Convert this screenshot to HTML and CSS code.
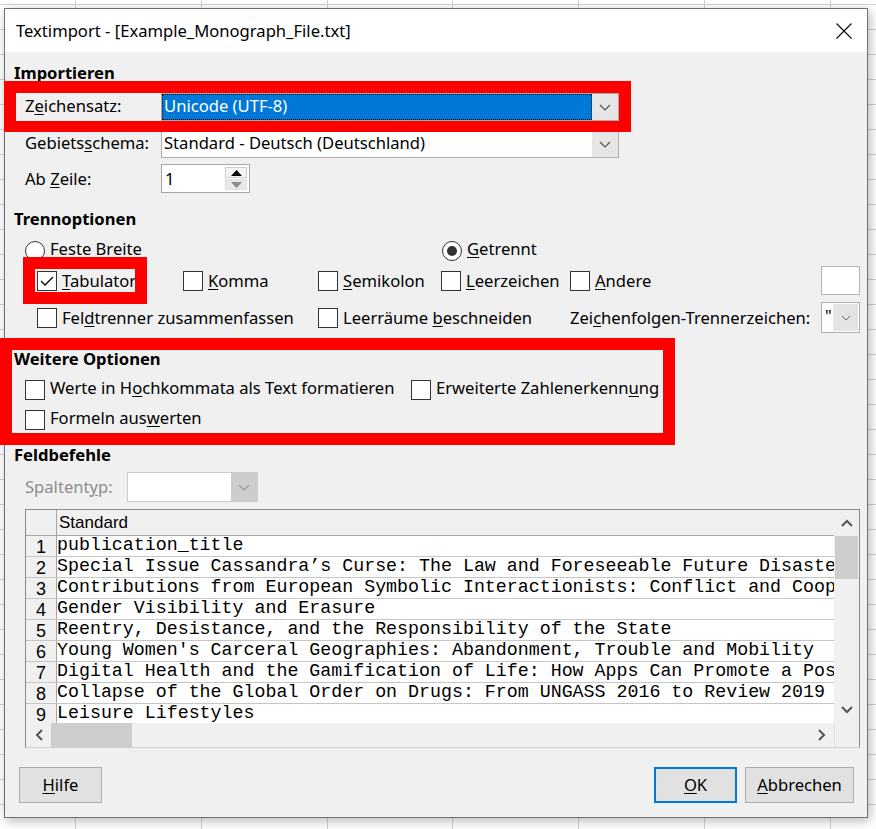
FILE: index.html
```html
<!DOCTYPE html>
<html lang="de">
<head>
<meta charset="utf-8">
<title>Textimport</title>
<link rel="stylesheet" href="styles.css">
</head>
<body>
<div class="dialog">
  <div class="titlebar">
    <span class="title">Textimport - [Example_Monograph_File.txt]</span>
    <svg class="close" width="16" height="16" viewBox="0 0 16 16"><path d="M0.5 0.5L15.5 15.5M15.5 0.5L0.5 15.5" stroke="#000" stroke-width="1.1" fill="none"/></svg>
  </div>
  <div class="content">
    <div class="heading h-import">Importieren</div>
    <div class="field f-charset">
      <span class="label">Z<u>e</u>ichensatz:</span>
      <div class="combo combo-wide">
        <span class="combo-text selected"><span class="txt">Unicode (UTF-8)</span></span>
        <span class="combo-btn"><svg width="12" height="7" viewBox="0 0 12 7"><path d="M1 1L6 6L11 1" stroke="#555" stroke-width="1.2" fill="none"/></svg></span>
      </div>
    </div>
    <div class="field f-locale">
      <span class="label">Gebiets<u>s</u>chema:</span>
      <div class="combo combo-wide">
        <span class="combo-text"><span class="txt">Standard - Deutsch (Deutschland)</span></span>
        <span class="combo-btn"><svg width="12" height="7" viewBox="0 0 12 7"><path d="M1 1L6 6L11 1" stroke="#555" stroke-width="1.2" fill="none"/></svg></span>
      </div>
    </div>
    <div class="field f-line">
      <span class="label">Ab <u>Z</u>eile:</span>
      <div class="spin">
        <span class="spin-text"><span class="txt">1</span></span>
        <span class="spin-btns">
          <span class="spin-up"><svg width="11" height="6" viewBox="0 0 11 6"><path d="M0 6L5.5 0L11 6Z" fill="#000"/></svg></span>
          <span class="spin-down"><svg width="11" height="6" viewBox="0 0 11 6"><path d="M0 0L5.5 6L11 0Z" fill="#8a8a8a"/></svg></span>
        </span>
      </div>
    </div>

    <div class="heading h-sep">Trennoptionen</div>
    <div class="radio-row">
      <label class="opt"><span class="radio"></span><span class="txt">Feste Breite</span></label>
      <label class="opt"><span class="radio checked"></span><span class="txt"><u>G</u>etrennt</span></label>
    </div>
    <div class="sep-grid sep-row1">
      <label class="opt"><span class="check checked"><svg width="16" height="12" viewBox="0 0 16 12"><path d="M2 6L6 10L14 2" stroke="#000" stroke-width="1.3" fill="none"/></svg></span><span class="txt"><u>T</u>abulator</span></label>
      <label class="opt"><span class="check"></span><span class="txt"><u>K</u>omma</span></label>
      <label class="opt"><span class="check"></span><span class="txt"><u>S</u>emikolon</span></label>
      <label class="opt"><span class="check"></span><span class="txt"><u>L</u>eerzeichen</span></label>
      <label class="opt"><span class="check"></span><span class="txt"><u>A</u>ndere</span></label>
      <span class="textbox"></span>
    </div>
    <div class="sep-grid sep-row3">
      <label class="opt span2"><span class="check"></span><span class="txt">Fel<u>d</u>trenner zusammenfassen</span></label>
      <label class="opt span2"><span class="check"></span><span class="txt">Leerräume <u>b</u>eschneiden</span></label>
      <span class="plain">Zei<u>c</u>henfolgen-Trennerzeichen:</span>
      <div class="combo combo-small">
        <span class="combo-text">"</span>
        <span class="combo-btn"><svg width="10" height="6" viewBox="0 0 10 6"><path d="M1 1L5 5L9 1" stroke="#666" stroke-width="1" fill="none"/></svg></span>
      </div>
    </div>

    <div class="heading h-more">Weitere Optionen</div>
    <div class="more-row more-row1">
      <label class="opt"><span class="check"></span><span class="txt">Werte in H<u>o</u>chkommata als Text formatieren</span></label>
      <label class="opt"><span class="check"></span><span class="txt">Erweiterte Zahlenerkenn<u>u</u>ng</span></label>
    </div>
    <div class="more-row more-row2">
      <label class="opt"><span class="check"></span><span class="txt">Formeln aus<u>w</u>erten</span></label>
    </div>

    <div class="heading h-field">Feldbefehle</div>
    <div class="field f-type">
      <span class="label-dis">Spaltent<u>y</u>p:</span>
      <div class="combo combo-dis">
        <span class="combo-text"></span>
        <span class="combo-btn"><svg width="12" height="7" viewBox="0 0 12 7"><path d="M1 1L6 6L11 1" stroke="#9a9a9a" stroke-width="1.1" fill="none"/></svg></span>
      </div>
    </div>

    <div class="preview">
      <div class="pv-main">
        <div class="pv-table">
          <div class="pv-row pv-head"><span class="num"></span><span class="head-cell">Standard</span></div>
          <div class="pv-row"><span class="num">1</span><span class="cell">publication_title</span></div>
          <div class="pv-row"><span class="num">2</span><span class="cell">Special Issue Cassandra’s Curse: The Law and Foreseeable Future Disaste</span></div>
          <div class="pv-row"><span class="num">3</span><span class="cell">Contributions from European Symbolic Interactionists: Conflict and Coop</span></div>
          <div class="pv-row"><span class="num">4</span><span class="cell">Gender Visibility and Erasure</span></div>
          <div class="pv-row"><span class="num">5</span><span class="cell">Reentry, Desistance, and the Responsibility of the State</span></div>
          <div class="pv-row"><span class="num">6</span><span class="cell">Young Women's Carceral Geographies: Abandonment, Trouble and Mobility</span></div>
          <div class="pv-row"><span class="num">7</span><span class="cell">Digital Health and the Gamification of Life: How Apps Can Promote a Pos</span></div>
          <div class="pv-row"><span class="num">8</span><span class="cell">Collapse of the Global Order on Drugs: From UNGASS 2016 to Review 2019</span></div>
          <div class="pv-row"><span class="num">9</span><span class="cell">Leisure Lifestyles</span></div>
        </div>
        <div class="vscroll">
          <span class="arrow"><svg width="12" height="8" viewBox="0 0 12 8"><path d="M1 7L6 2L11 7" stroke="#555" stroke-width="2" fill="none"/></svg></span>
          <span class="vthumb"></span>
          <span class="vspace"></span>
          <span class="arrow"><svg width="12" height="8" viewBox="0 0 12 8"><path d="M1 1L6 6L11 1" stroke="#555" stroke-width="2" fill="none"/></svg></span>
        </div>
      </div>
      <div class="pv-bottom">
        <div class="hscroll">
          <span class="harrow"><svg width="8" height="12" viewBox="0 0 8 12"><path d="M7 1L2 6L7 11" stroke="#555" stroke-width="2" fill="none"/></svg></span>
          <span class="hthumb"></span>
          <span class="hspace"></span>
          <span class="harrow"><svg width="8" height="12" viewBox="0 0 8 12"><path d="M1 1L6 6L1 11" stroke="#555" stroke-width="2" fill="none"/></svg></span>
        </div>
        <div class="corner"></div>
      </div>
    </div>

    <div class="buttons">
      <button class="btn btn-help"><u>H</u>ilfe</button>
      <div class="btn-group">
        <button class="btn btn-ok"><u>O</u>K</button>
        <button class="btn btn-cancel"><u>A</u>bbrechen</button>
      </div>
    </div>
  </div>
</div>

<div class="annot annot-charset"></div>
<div class="annot annot-tab"></div>
<div class="annot annot-more"></div>
</body>
</html>
```

FILE: styles.css
```css
* { box-sizing: border-box; }
html, body { margin: 0; }
body {
  position: relative;
  width: 876px;
  height: 829px;
  overflow: hidden;
  padding: 8px 0 0 4px;
  background-color: #fff;
  background-image:
    repeating-linear-gradient(to right, transparent 0 75px, #d2d2d2 75px 76px, transparent 76px 125.83px),
    repeating-linear-gradient(to bottom, transparent 0 4px, #d2d2d2 4px 5px, transparent 5px 25px);
  font-family: "Noto Sans", "Open Sans", sans-serif;
  font-size: 16.6px;
  color: #000;
}
u { text-decoration: underline; text-underline-offset: 2px; text-decoration-thickness: 1px; }

.dialog {
  width: 864px;
  height: 810px;
  border: 1px solid #707070;
  background: #f0f0f0;
  box-shadow: 2px 3px 10px rgba(0,0,0,0.28);
  display: flex;
  flex-direction: column;
}
.titlebar {
  height: 43px;
  flex: none;
  background: #fff;
  display: flex;
  align-items: center;
  padding-left: 11px;
  padding-right: 15px;
}
.title { font-size: 16.6px; }
.close { margin-left: auto; }

.content { padding-left: 9px; display: flex; flex-direction: column; }

.heading { font-weight: 700; line-height: 20px; height: 20px; }
.h-import { margin-top: 11px; }
.h-sep { margin-top: 16px; }
.h-more { margin-top: 16px; }
.h-field { margin-top: 17px; }

.txt, .label, .label-dis, .plain { line-height: 20px; padding-bottom: 0; }
.f-charset .label, .f-charset .txt, .f-locale .label, .f-locale .txt { padding-bottom: 2px; }
.radio-row .txt, .more-row .txt { padding-bottom: 4px; }

.field { display: flex; align-items: center; margin-left: 11px; }
.label, .label-dis { width: 136px; flex: none; white-space: nowrap; }
.label-dis { width: 102px; color: #8d8d8d; }
.f-charset { margin-top: 10px; height: 28px; }
.f-locale { margin-top: 9px; height: 28px; }
.f-line { margin-top: 6px; height: 29px; }
.f-type { margin-top: 7px; height: 30px; }

.combo {
  display: flex;
  height: 100%;
  border: 1px solid #adadad;
  background: #fff;
}
.combo-wide { width: 458px; }
.combo-text {
  flex: 1;
  display: flex;
  align-items: center;
  padding-left: 2px;
  white-space: nowrap;
  overflow: hidden;
}
.combo-text.selected {
  background: #0078d7;
  color: #fff;
  outline: 1px dotted #111;
  outline-offset: -1px;
}
.combo-btn {
  width: 26px;
  flex: none;
  background: #e5e5e5;
  display: flex;
  align-items: center;
  justify-content: center;
}
.f-charset .combo { border-color: #a8a8a8; }
.combo-dis { width: 131px; border-color: #cccccc; }
.combo-dis .combo-btn { background: #cccccc; }

.spin {
  width: 89px;
  height: 100%;
  border: 1px solid #a8a8a8;
  background: #fff;
  display: flex;
}
.spin-text { flex: 1; padding-left: 3px; display: flex; align-items: center; }
.spin-btns { width: 25px; padding: 2px 2px 2px 1px; display: flex; flex-direction: column; gap: 1px; }
.spin-up, .spin-down { flex: 1; display: flex; align-items: center; justify-content: center; }
.spin-up { background: #f3f3f3; border: 1px solid #cfcfcf; }
.spin-down { background: #e8e8e8; border: 1px solid #dcdcdc; }

.opt { display: flex; align-items: center; gap: 5px; white-space: nowrap; }
.plain { white-space: nowrap; }
.radio {
  width: 20px; height: 20px; border-radius: 50%;
  border: 1px solid #333; background: #fff; flex: none;
  display: flex; align-items: center; justify-content: center;
}
.radio.checked::after { content: ""; width: 10px; height: 10px; border-radius: 50%; background: #333; }
.check {
  width: 20px; height: 20px; border: 1px solid #333; background: #fff; flex: none;
  display: flex; align-items: center; justify-content: center;
}
.radio-row {
  margin-top: 10px; margin-left: 11px; height: 20px;
  display: grid; grid-template-columns: 417px auto; align-items: center;
}
.sep-grid {
  margin-left: 23px;
  display: grid;
  grid-template-columns: 146px 135px 123px 129px 251px 39px;
  align-items: center;
}
.sep-row1 { margin-top: 7px; height: 29px; }
.sep-row3 { margin-top: 7px; height: 31px; }
.span2 { grid-column: span 2; }
.textbox { width: 39px; height: 29px; border: 1px solid #b4b4b4; background: #fff; }
.combo-small { width: 39px; height: 31px; }
.combo-small .combo-text { padding-left: 3px; align-items: flex-start; padding-top: 1px; }
.combo-small .combo-btn { width: 25px; margin: 1px 1px 1px 0; background: #e3e3e3; }

.more-row { margin-left: 11px; height: 20px; display: grid; grid-template-columns: 386px auto; align-items: center; }
.more-row1 { margin-top: 9px; }
.more-row2 { margin-top: 10px; }

.preview {
  margin-top: 7px;
  margin-left: 11px;
  width: 835px;
  height: 239px;
  border: 1px solid #8a8a8a;
  border-bottom-color: #d0d0d0;
  display: flex;
  flex-direction: column;
  background: #fff;
}
.pv-main { display: flex; height: 213px; }
.pv-table { flex: 1; overflow: hidden; }
.pv-row { display: flex; height: 21px; border-bottom: 1px solid #c6c6c6; }
.pv-head { height: 26px; background: #f0f0f0; border-bottom-color: #a6a6a6; }
.num {
  width: 31px; flex: none;
  background: #f0f0f0;
  border-right: 1px solid #a6a6a6;
  font-family: "Liberation Sans", Arial, sans-serif;
  font-size: 18px;
  line-height: 18px;
  display: flex; align-items: flex-end; justify-content: center;
}
.head-cell {
  padding-left: 2px;
  font-family: "Liberation Sans", Arial, sans-serif;
  font-size: 17px;
  line-height: 25px;
}
.cell {
  white-space: nowrap;
  font-family: "Liberation Mono", "Courier New", monospace;
  font-size: 18.3px;
  line-height: 19px;
  overflow: hidden;
}
.vscroll {
  width: 25px; flex: none; background: #f0f0f0;
  display: flex; flex-direction: column; align-items: center;
}
.vscroll .arrow { height: 26px; display: flex; align-items: center; justify-content: center; width: 100%; }
.vthumb { width: 23px; height: 43px; background: #cdcdcd; flex: none; }
.vspace { flex: 1; }
.pv-bottom { display: flex; flex: 1; }
.hscroll { flex: 1; background: #f0f0f0; display: flex; align-items: stretch; }
.harrow { width: 25px; display: flex; align-items: center; justify-content: center; flex: none; }
.hthumb { width: 81px; background: #cdcdcd; }
.hspace { flex: 1; }
.corner { width: 25px; background: #f0f0f0; border-left: 1px solid #e0e0e0; }

.buttons {
  margin-top: 19px;
  margin-left: 5px;
  margin-right: 13px;
  display: flex;
  justify-content: space-between;
}
.btn-group { display: flex; gap: 8px; }
.btn {
  height: 36px;
  border: 1px solid #adadad;
  background: #e1e1e1;
  font: inherit;
  color: #000;
  padding: 0 0 2px;
}
.btn-help { width: 83px; }
.btn-ok { width: 83px; border: 2px solid #0078d7; }
.btn-cancel { width: 109px; }

.annot { position: absolute; border: 12px solid #ff0000; }
.annot-charset { left: 4px; top: 81px; width: 627px; height: 51px; border-bottom-width: 11px; }
.annot-tab { left: 23px; top: 257px; width: 124px; height: 47px; }
.annot-more { left: 0; top: 338px; width: 675px; height: 107px; }
```
